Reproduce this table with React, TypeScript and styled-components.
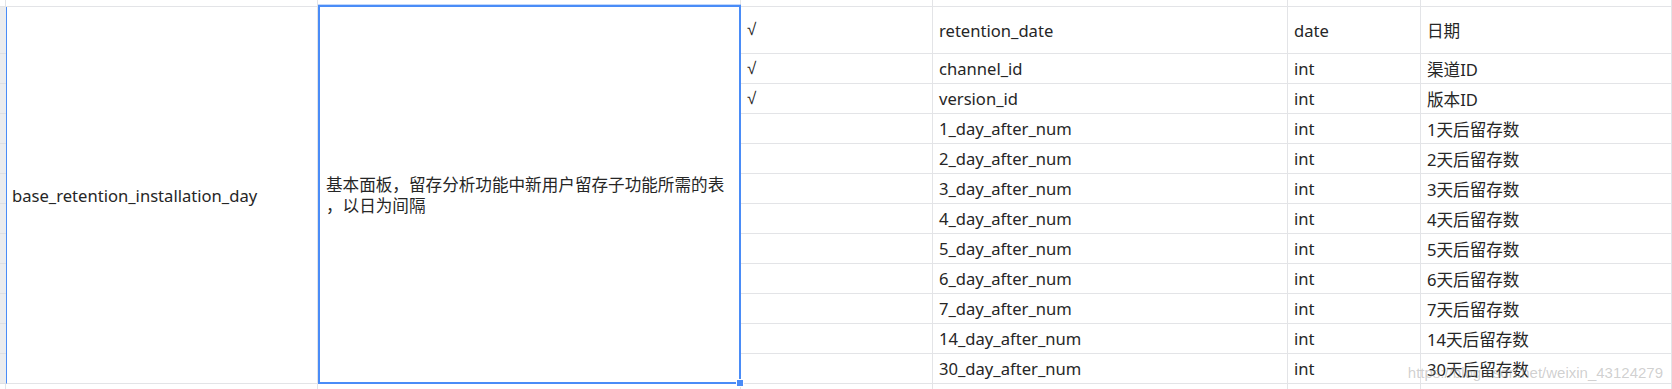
import React from 'react'
import styled, { createGlobalStyle } from 'styled-components'

const GlobalStyle = createGlobalStyle`
  html, body {
    margin: 0;
    padding: 0;
    background: #ffffff;
  }
  body {
    font-family: 'Noto Sans', 'Noto Sans CJK SC', sans-serif;
    color: #262626;
  }
`

const LINE = '#e3e4e7'
const BLUE = '#4a8cf7'

const rows = [
  ['√', 'retention_date', 'date', '日期'],
  ['√', 'channel_id', 'int', '渠道ID'],
  ['√', 'version_id', 'int', '版本ID'],
  ['', '1_day_after_num', 'int', '1天后留存数'],
  ['', '2_day_after_num', 'int', '2天后留存数'],
  ['', '3_day_after_num', 'int', '3天后留存数'],
  ['', '4_day_after_num', 'int', '4天后留存数'],
  ['', '5_day_after_num', 'int', '5天后留存数'],
  ['', '6_day_after_num', 'int', '6天后留存数'],
  ['', '7_day_after_num', 'int', '7天后留存数'],
  ['', '14_day_after_num', 'int', '14天后留存数'],
  ['', '30_day_after_num', 'int', '30天后留存数'],
]

const Sheet = styled.div`
  position: relative;
  width: 1672px;
  height: 389px;
  overflow: hidden;
  display: grid;
  grid-template-columns: 6px 312px 423px 192px 355px 133px 1fr;
  grid-template-rows: 7px 47px repeat(11, 30px) 5px;
  font-size: 16.6px;
`

const EdgeCell = styled.div<{ $bottom?: boolean }>`
  border-right: 1px solid ${LINE};
  border-bottom: ${(p) => (p.$bottom ? 'none' : `1px solid ${LINE}`)};
`

const RowHeader = styled.div`
  background: #ebecee;
  border-bottom: 1px solid #dfe0e3;
`

const Cell = styled.div<{ $mark?: boolean }>`
  display: flex;
  align-items: center;
  padding: 0 6px;
  border-right: 1px solid ${LINE};
  border-bottom: 1px solid ${LINE};
  white-space: nowrap;
  overflow: hidden;
  font-family: ${(p) =>
    p.$mark ? "'Liberation Sans', sans-serif" : "'Noto Sans', 'Noto Sans CJK SC', sans-serif"};
  font-size: ${(p) => (p.$mark ? '17px' : 'inherit')};
`

const TableCell = styled(Cell)`
  grid-row: 2 / span 12;
  grid-column: 2;
  border-left: 1px solid ${BLUE};
  padding-left: 5px;
`

const DescCell = styled(Cell)`
  position: relative;
  grid-row: 2 / span 12;
  grid-column: 3;
  border: 2px solid ${BLUE};
  margin-top: -2px;
  box-shadow: 0 -1px 0 rgba(74, 140, 247, 0.35);
  white-space: normal;
  line-height: 21px;
  overflow: visible;
`

const FillHandle = styled.span`
  position: absolute;
  right: -5px;
  bottom: -5px;
  width: 6px;
  height: 6px;
  background: ${BLUE};
  border: 1px solid #ffffff;
`

const Watermark = styled.div`
  position: absolute;
  right: 9px;
  bottom: 8px;
  font-family: 'Liberation Sans', Arial, sans-serif;
  font-size: 15px;
  color: rgba(150, 150, 150, 0.45);
  pointer-events: none;
`

export default function App() {
  return (
    <>
      <GlobalStyle />
      <Sheet>
        {Array.from({ length: 7 }).map((_, i) => (
          <EdgeCell key={`t${i}`} />
        ))}
        {rows.map((_, i) => (
          <RowHeader key={`h${i}`} style={{ gridRow: i + 2, gridColumn: 1 }} />
        ))}
        <TableCell>base_retention_installation_day</TableCell>
        <DescCell>
          <div>
            基本面板，留存分析功能中新用户留存子功能所需的表
            <br />
            ，以日为间隔
          </div>
          <FillHandle />
        </DescCell>
        {rows.map((r, i) =>
          r.map((text, j) => (
            <Cell
              key={`c${i}-${j}`}
              $mark={j === 0}
              style={{ gridRow: i + 2, gridColumn: j + 4 }}
            >
              {text}
            </Cell>
          ))
        )}
        {Array.from({ length: 7 }).map((_, i) => (
          <EdgeCell key={`b${i}`} $bottom />
        ))}
        <Watermark>https://blog.csdn.net/weixin_43124279</Watermark>
      </Sheet>
    </>
  )
}
